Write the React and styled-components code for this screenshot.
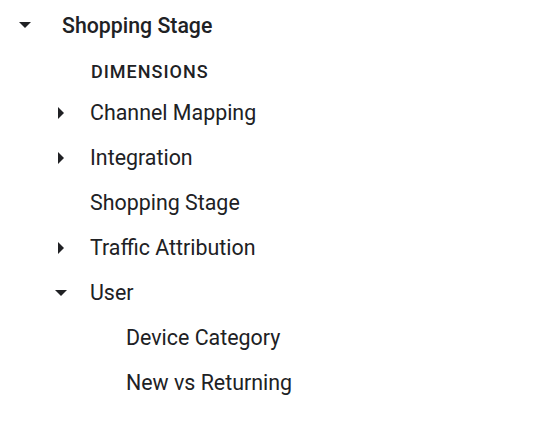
import React from "react";
import styled, { createGlobalStyle } from "styled-components";

const GlobalStyle = createGlobalStyle`
  body {
    margin: 0;
    background: #ffffff;
    font-family: Roboto, "Liberation Sans", sans-serif;
    color: #202124;
  }
`;

const Tree = styled.div`
  width: 542px;
  height: 424px;
  padding-top: 3px;
  box-sizing: border-box;
`;

const Row = styled.div`
  display: flex;
  align-items: center;
  height: 45px;
  padding-left: ${({ level }) => 14 + level * 36}px;
`;

const HeaderRow = styled(Row)`
  height: 44px;
`;

const CaretBox = styled.span`
  width: 22px;
  height: 22px;
  display: inline-flex;
  align-items: center;
  justify-content: center;
  margin-right: ${({ wide }) => (wide ? 26 : 18)}px;
  visibility: ${({ hidden }) => (hidden ? "hidden" : "visible")};
`;

const Title = styled.span`
  font-size: 21.3px;
  font-weight: 500;
`;

const Label = styled.span`
  font-size: 21.4px;
  font-weight: 400;
`;

const Section = styled.div`
  height: 43px;
  display: flex;
  align-items: flex-end;
  padding-left: 91px;
  padding-bottom: 8px;
  box-sizing: border-box;
  font-size: 18px;
  font-weight: 500;
  letter-spacing: 1px;
`;

const Caret = ({ open }) => (
  <svg width="12" height="12" viewBox="0 0 12 12">
    {open ? (
      <path d="M0 3h12L6 9z" fill="#202124" />
    ) : (
      <path d="M3 0v12L9 6z" fill="#202124" />
    )}
  </svg>
);

const items = [
  { label: "Channel Mapping", level: 1, caret: "closed" },
  { label: "Integration", level: 1, caret: "closed" },
  { label: "Shopping Stage", level: 1 },
  { label: "Traffic Attribution", level: 1, caret: "closed" },
  { label: "User", level: 1, caret: "open" },
  { label: "Device Category", level: 2 },
  { label: "New vs Returning", level: 2 },
];

export default function App() {
  return (
    <>
      <GlobalStyle />
      <Tree>
        <HeaderRow level={0}>
          <CaretBox wide>
            <Caret open />
          </CaretBox>
          <Title>Shopping Stage</Title>
        </HeaderRow>
        <Section>DIMENSIONS</Section>
        {items.map((it) => (
          <Row key={it.label} level={it.level}>
            <CaretBox hidden={!it.caret}>
              <Caret open={it.caret === "open"} />
            </CaretBox>
            <Label>{it.label}</Label>
          </Row>
        ))}
      </Tree>
    </>
  );
}
